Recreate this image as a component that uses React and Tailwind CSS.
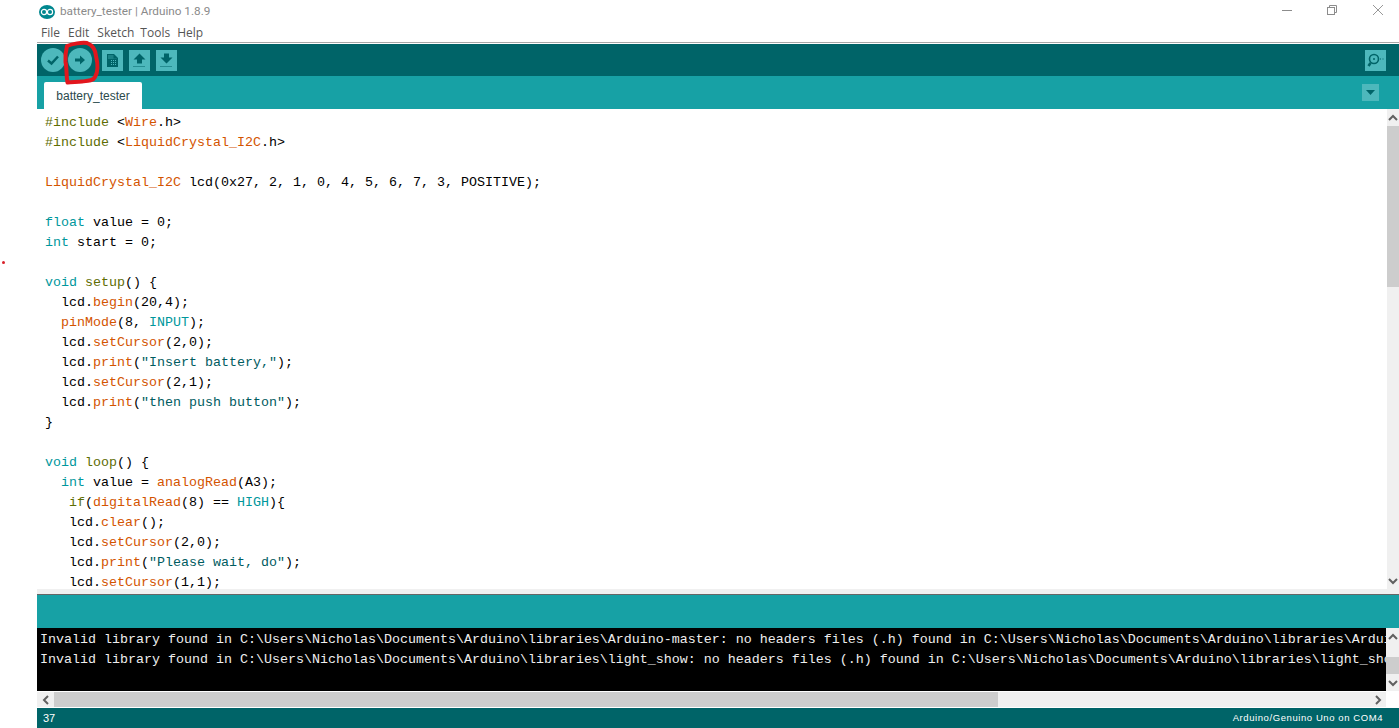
import React from 'react';

const O = 'text-[#d35400]';
const T = 'text-[#00979c]';
const G = 'text-[#5e6d03]';
const S = 'text-[#005c5f]';

// each line is a list of [text, colorClass]
const code = [
  [['#include', G], [' <'], ['Wire', O], ['.h>']],
  [['#include', G], [' <'], ['LiquidCrystal_I2C', O], ['.h>']],
  [],
  [['LiquidCrystal_I2C', O], [' lcd(0x27, 2, 1, 0, 4, 5, 6, 7, 3, POSITIVE);']],
  [],
  [['float', T], [' value = 0;']],
  [['int', T], [' start = 0;']],
  [],
  [['void', T], [' '], ['setup', G], ['() {']],
  [['  lcd.'], ['begin', O], ['(20,4);']],
  [['  '], ['pinMode', O], ['(8, '], ['INPUT', T], [');']],
  [['  lcd.'], ['setCursor', O], ['(2,0);']],
  [['  lcd.'], ['print', O], ['('], ['"Insert battery,"', S], [');']],
  [['  lcd.'], ['setCursor', O], ['(2,1);']],
  [['  lcd.'], ['print', O], ['('], ['"then push button"', S], [');']],
  [['}']],
  [],
  [['void', T], [' '], ['loop', G], ['() {']],
  [['  '], ['int', T], [' value = '], ['analogRead', O], ['(A3);']],
  [['   '], ['if', G], ['('], ['digitalRead', O], ['(8) == '], ['HIGH', T], ['){']],
  [['   lcd.'], ['clear', O], ['();']],
  [['   lcd.'], ['setCursor', O], ['(2,0);']],
  [['   lcd.'], ['print', O], ['('], ['"Please wait, do"', S], [');']],
  [['   lcd.'], ['setCursor', O], ['(1,1);']],
];

const consoleLines = [
  'Invalid library found in C:\\Users\\Nicholas\\Documents\\Arduino\\libraries\\Arduino-master: no headers files (.h) found in C:\\Users\\Nicholas\\Documents\\Arduino\\libraries\\Arduino-master',
  'Invalid library found in C:\\Users\\Nicholas\\Documents\\Arduino\\libraries\\light_show: no headers files (.h) found in C:\\Users\\Nicholas\\Documents\\Arduino\\libraries\\light_show',
];

const Chevron = ({ dir }) => {
  const paths = {
    up: 'M2 8 L6 4 L10 8',
    down: 'M2 4 L6 8 L10 4',
    left: 'M8 2 L4 6 L8 10',
    right: 'M4 2 L8 6 L4 10',
  };
  return (
    <svg width="12" height="12" viewBox="0 0 12 12" fill="none" stroke="#606060" strokeWidth="2">
      <path d={paths[dir]} />
    </svg>
  );
};

const ToolSquare = ({ children }) => (
  <div className="w-[21px] h-[21px] bg-[#4db8bc] flex items-center justify-center">{children}</div>
);

const ToolCircle = ({ children }) => (
  <div className="w-[24px] h-[24px] rounded-full bg-[#4db8bc] flex items-center justify-center">{children}</div>
);

const ArduinoLogo = () => (
  <svg width="16" height="14" viewBox="0 0 16 14">
    <ellipse cx="8" cy="7" rx="8" ry="7" fill="#00878f" />
    <circle cx="5" cy="7" r="2.6" fill="none" stroke="#fff" strokeWidth="1.2" />
    <circle cx="11" cy="7" r="2.6" fill="none" stroke="#fff" strokeWidth="1.2" />
  </svg>
);

export default function App() {
  return (
    <div className="w-[1399px] h-[728px] bg-white overflow-hidden relative flex flex-col font-['Liberation_Sans',sans-serif]">
      {/* title bar */}
      <div className="h-[24px] flex items-center pl-[39px] shrink-0">
        <ArduinoLogo />
        <span className="ml-[5px] text-[11.75px] text-[#8a8a8a] font-['Roboto',sans-serif]">battery_tester | Arduino 1.8.9</span>
        <div className="ml-auto mb-[4px] flex items-center pr-[16px]">
          <div className="w-[10px] h-px bg-[#8c8c8c]" />
          <svg className="ml-[35px]" width="10" height="10" viewBox="0 0 10 10" fill="none" stroke="#8c8c8c">
            <path d="M2.500 2.500 V0.500 H9.500 V7.500 H7.500" />
            <rect x="0.500" y="2.500" width="7" height="7" />
          </svg>
          <svg className="ml-[36px]" width="10" height="10" viewBox="0 0 10 10" fill="none" stroke="#8c8c8c" strokeWidth="0.9">
            <path d="M0 0 L10 10 M10 0 L0 10" />
          </svg>
        </div>
      </div>

      {/* menu bar */}
      <div className="h-[18px] flex items-center pl-[41px] text-[12px] text-[#555555] font-['Open_Sans',sans-serif] shrink-0">
        <span>File</span>
        <span className="ml-[8px]">Edit</span>
        <span className="ml-[8px]">Sketch</span>
        <span className="ml-[6px]">Tools</span>
        <span className="ml-[7px]">Help</span>
      </div>

      <div className="flex-1 flex min-h-0">
        <div className="w-[37px] shrink-0" />
        <div className="flex-1 flex flex-col min-w-0 border-t border-[#a8a8a8]">
          {/* toolbar */}
          <div className="h-[32px] mt-px bg-[#006468] flex items-center pl-[4px] pr-[13px] shrink-0">
            <ToolCircle>
              <svg width="14" height="14" viewBox="0 0 14 14" fill="none" stroke="#006468" strokeWidth="2.500">
                <path d="M2 7.500 L5.500 10.500 L12 3.500" />
              </svg>
            </ToolCircle>
            <div className="ml-[3px]">
              <ToolCircle>
                <svg width="12" height="12" viewBox="0 0 12 12" fill="#006468">
                  <path d="M1 4.500 H6 V1.500 L11 6 L6 10.500 V7.500 H1 Z" />
                </svg>
              </ToolCircle>
            </div>
            <div className="ml-[10px] flex gap-[6px]">
              <ToolSquare>
                <svg width="11" height="13" viewBox="0 0 11 13">
                  <path d="M0 0 H7 L11 4 V13 H0 Z" fill="#006468" />
                  <path d="M1 1 H6.500 V4.500 H10 V5 H1 Z" fill="#4db8bc" opacity="0.35" />
                  <path d="M4 6 H5 V7 H4 Z M6 6 H7 V7 H6 Z M8 6 H9 V7 H8 Z M4 8 H5 V9 H4 Z M6 8 H7 V9 H6 Z M8 8 H9 V9 H8 Z M4 10 H5 V11 H4 Z M6 10 H7 V11 H6 Z M8 10 H9 V11 H8 Z" fill="#4db8bc" />
                </svg>
              </ToolSquare>
              <ToolSquare>
                <svg width="13" height="14" viewBox="0 0 13 14" fill="#006468">
                  <path d="M6.500 0.500 L12.500 6.500 H9 V10.500 H4 V6.500 H0.500 Z" />
                  <path d="M0.500 13 H1.500 V14 H0.500 Z M2.500 13 H3.500 V14 H2.500 Z M4.500 13 H5.500 V14 H4.500 Z M6.500 13 H7.500 V14 H6.500 Z M8.500 13 H9.500 V14 H8.500 Z M10.500 13 H11.500 V14 H10.500 Z" />
                </svg>
              </ToolSquare>
              <ToolSquare>
                <svg width="13" height="14" viewBox="0 0 13 14" fill="#006468">
                  <path d="M4 0.500 H9 V4.500 H12.500 L6.500 10.500 L0.500 4.500 H4 Z" />
                  <path d="M0.500 13 H1.500 V14 H0.500 Z M2.500 13 H3.500 V14 H2.500 Z M4.500 13 H5.500 V14 H4.500 Z M6.500 13 H7.500 V14 H6.500 Z M8.500 13 H9.500 V14 H8.500 Z M10.500 13 H11.500 V14 H10.500 Z" />
                </svg>
              </ToolSquare>
            </div>
            <div className="ml-auto">
              <ToolSquare>
                <svg width="18" height="16" viewBox="0 0 18 16" fill="none" stroke="#006468" strokeWidth="1.600">
                  <circle cx="7" cy="7" r="4.500" />
                  <path d="M3.500 11 L1.500 14" strokeWidth="2.500" />
                  <circle cx="7" cy="7" r="1" fill="#006468" stroke="none" />
                  <path d="M13 7 H17" strokeWidth="1" strokeDasharray="1 1.500" />
                </svg>
              </ToolSquare>
            </div>
          </div>

          {/* tab band */}
          <div className="h-[33px] bg-[#17a1a5] flex items-end pl-[7px] pr-[20px] shrink-0">
            <div className="h-[27px] w-[98px] bg-white rounded-t-[2px] flex items-center justify-center text-[12px] text-[#2b4a4c]">
              battery_tester
            </div>
            <div className="ml-auto mb-[8px] w-[17px] h-[17px] bg-[#4db8bc] flex items-center justify-center">
              <svg width="9" height="5" viewBox="0 0 9 5" fill="#006468">
                <path d="M0 0 H9 L4.500 5 Z" />
              </svg>
            </div>
          </div>

          {/* editor */}
          <div className="h-[480px] flex shrink-0">
            <div className="flex-1 min-w-0 overflow-hidden pl-[8px] pt-[4px] font-['Liberation_Mono',monospace] text-[13.333px] leading-[20px] text-black whitespace-pre">
              {code.map((line, i) => (
                <div key={i} className="h-[20px]">
                  {line.map(([text, color], j) => (
                    <span key={j} className={color}>{text}</span>
                  ))}
                </div>
              ))}
            </div>
            <div className="w-[12px] shrink-0 flex flex-col bg-[#f0f0f0]">
              <div className="h-[17px] flex items-center justify-center"><Chevron dir="up" /></div>
              <div className="h-[161px] bg-[#cdcdcd]" />
              <div className="flex-1" />
              <div className="h-[17px] flex items-center justify-center"><Chevron dir="down" /></div>
            </div>
          </div>

          {/* divider */}
          <div className="h-[5px] bg-[#f0f0f0] shrink-0" />
          <div className="h-px bg-[#666666] shrink-0" />

          {/* message band */}
          <div className="h-[33px] bg-[#17a1a5] shrink-0" />

          {/* console */}
          <div className="h-[63px] flex shrink-0">
            <div className="flex-1 min-w-0 overflow-hidden bg-black pl-[3px] pt-[2px] font-['Liberation_Mono',monospace] text-[13.333px] leading-[20px] text-[#eeeeee] whitespace-pre">
              {consoleLines.map((line, i) => (
                <div key={i}>{line}</div>
              ))}
            </div>
            <div className="w-[13px] shrink-0 flex flex-col bg-[#f0f0f0]">
              <div className="h-[17px] flex items-center justify-center"><Chevron dir="up" /></div>
              <div className="flex-1 flex flex-col justify-end"><div className="h-[17px] bg-[#cdcdcd]" /></div>
              <div className="h-[17px] flex items-center justify-center"><Chevron dir="down" /></div>
            </div>
          </div>

          {/* horizontal scrollbar */}
          <div className="h-[16px] flex items-stretch shrink-0 border-t border-white">
            <div className="flex-1 flex items-stretch bg-[#f0f0f0]">
              <div className="w-[17px] flex items-center justify-center"><Chevron dir="left" /></div>
              <div className="w-[944px] bg-[#cdcdcd]" />
              <div className="flex-1" />
              <div className="w-[17px] flex items-center justify-center"><Chevron dir="right" /></div>
            </div>
            <div className="w-[13px] shrink-0" />
          </div>

          {/* status bar */}
          <div className="flex-1 bg-[#006468] flex items-center justify-between pl-[6px] pr-[16px] pt-px text-white border-t border-white">
            <span className="text-[11px]">37</span>
            <span className="text-[9.500px] tracking-[0.58px]">Arduino/Genuino Uno on COM4</span>
          </div>
        </div>
      </div>

      {/* red marks drawn over the screenshot */}
      <div className="absolute left-[2px] top-[261px] w-[3px] h-[3px] rounded-full bg-[#d8212a]" />
      <svg className="absolute left-[60px] top-[40px]" width="42" height="46" viewBox="0 0 42 46" fill="none" stroke="#e2161d" strokeWidth="4" strokeLinecap="round" strokeLinejoin="round">
        <path d="M7 6 C12 4 22 2 27 3 C32 5 35.500 10 36 16 C38 24 38 32 35 37 C33 41 28 41 22 41.500 C16 42 11 42 7.500 42.500 C6 35 7 28 5.500 22 C5 15 6 10 7 6 Z" />
      </svg>
    </div>
  );
}
